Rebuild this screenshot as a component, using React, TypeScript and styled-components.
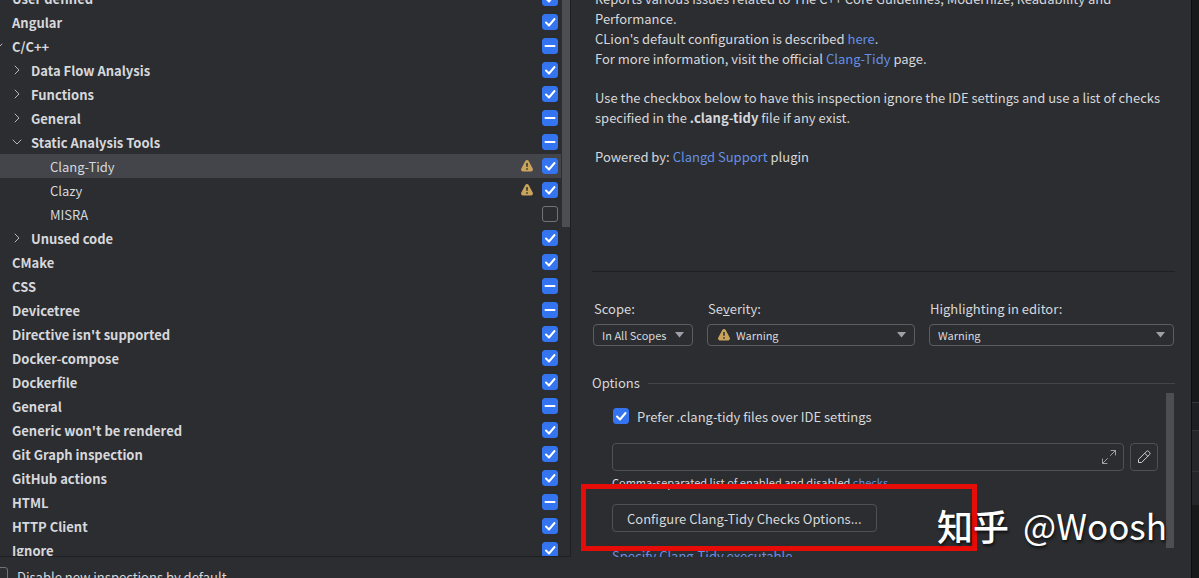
import React from 'react';
import styled, { createGlobalStyle } from 'styled-components';

const Global = createGlobalStyle`
  *, *::before, *::after { box-sizing: border-box; }
  body {
    margin: 0;
    background: #18191b;
    color: #d7d8dc;
    font: 13px/20px "Noto Sans CJK SC", "Noto Sans", sans-serif;
    overflow: hidden;
  }
  button, input, select { font: inherit; color: inherit; }
`;

const Window = styled.div`
  display: flex;
  height: 100vh;
  position: relative;
`;

const Dialog = styled.main`
  flex: 1;
  min-width: 0;
  display: grid;
  grid-template-rows: minmax(0, 1fr) 21px;
  background: #2b2d30;
  border-right: 1px solid #0c0c0d;
`;

const Backdrop = styled.aside`
  width: 7px;
  display: flex;
  flex-direction: column;
  background: #18191b;
`;

const Pane = styled.div<{ $height: number; $tone: string }>`
  height: ${p => p.$height}px;
  background: ${p => p.$tone};
  border-top: 1px solid #323438;
`;

const PaneSpacer = styled.div`
  height: 402px;
`;

const Content = styled.div`
  display: grid;
  grid-template-columns: minmax(0, 571fr) minmax(0, 620fr);
  min-height: 0;
`;

const TreePanel = styled.section`
  display: flex;
  min-width: 0;
  overflow: hidden;
  border-right: 1px solid #1e1f22;
  border-bottom: 1px solid #1e1f22;
`;

const Tree = styled.ul`
  flex: 1;
  min-width: 0;
  list-style: none;
  margin: -14px 1px 0 0;
  padding: 0;
`;

const TreeRow = styled.li<{ $level: number; $selected?: boolean }>`
  display: flex;
  align-items: center;
  height: 24px;
  padding-right: 3px;
  background: ${p => (p.$selected ? '#43454a' : 'transparent')};
  font-weight: ${p => (p.$level === 2 ? 400 : 700)};

  &::before {
    content: '';
    width: ${p => p.$level * 19}px;
  }
`;

const ChevronSlot = styled.span`
  display: flex;
  width: 16px;
  margin: 0 6px 0 -10px;
  color: #b4b8bf;
`;

const RowLabel = styled.label`
  flex: 1;
  padding-top: 2px;
`;

const WarnSlot = styled.span`
  display: flex;
  margin-right: 8px;
`;

const Thumb = styled.div<{ $height: number }>`
  flex: none;
  width: 8px;
  height: ${p => p.$height}px;
  background: #4d4e51;
`;

const BoxWrap = styled.span`
  display: inline-grid;
  flex: none;
  width: 16px;
  height: 16px;

  > * { grid-area: 1 / 1; }
  > svg { pointer-events: none; }
`;

const BoxInput = styled.input`
  appearance: none;
  width: 16px;
  height: 16px;
  margin: 0;
  border: 1px solid #6f737a;
  border-radius: 3px;

  &:checked, &:indeterminate {
    border-color: #3574f0;
    background: #3574f0;
  }
`;

const Footer = styled.footer`
  display: flex;
  gap: 9px;
  padding-top: 10px;
  margin-left: -8px;
  overflow: hidden;
`;

const FooterLabel = styled.label`
  white-space: nowrap;
`;

const Details = styled.section`
  display: flex;
  flex-direction: column;
  min-width: 0;
  overflow: hidden;
  padding: 0 16px 0 21px;
`;

const Description = styled.div`
  flex: none;
  height: 283px;
  margin-top: -11px;
  padding: 0 3px;
  border-bottom: 1px solid #1e1f22;
`;

const Paragraph = styled.p`
  margin: 0 0 19px;
`;

const Link = styled.a`
  color: #6590e4;
  text-decoration: none;
`;

const Settings = styled.div`
  display: grid;
  grid-template-columns: 100px minmax(0, 208fr) minmax(0, 245fr);
  gap: 14px;
  padding: 27px 1px 0;
`;

const Field = styled.div`
  display: flex;
  flex-direction: column;
  gap: 5px;
`;

const FieldLabel = styled.label`
  padding-left: 1px;
`;

const SelectFrame = styled.div`
  display: grid;
  align-items: center;

  > * { grid-area: 1 / 1; }
  > svg { pointer-events: none; }
`;

const Select = styled.select<{ $icon?: boolean }>`
  appearance: none;
  width: 100%;
  height: 22px;
  padding: 0 20px 0 ${p => (p.$icon ? 28 : 8)}px;
  border: 1px solid #5a5d63;
  border-radius: 4px;
  background: transparent;
  font-size: 11px;
  line-height: 20px;
`;

const ArrowIcon = styled.svg`
  justify-self: end;
  margin-right: 9px;
`;

const SelectWarn = styled.span`
  display: flex;
  padding-left: 10px;
  pointer-events: none;
`;

const OptionsHeading = styled.h2`
  display: flex;
  align-items: center;
  gap: 8px;
  margin: 27px 0 0;
  font-size: 13px;
  font-weight: 400;
  line-height: 20px;

  &::after {
    content: '';
    flex: 1;
    height: 1px;
    background: #43454a;
  }
`;

const OptionsScroll = styled.div`
  display: flex;
  flex: 1;
  min-height: 0;
  padding-right: 1px;
`;

const Options = styled.div`
  flex: 1;
  min-width: 0;
  padding: 13px 8px 0 20px;
`;

const CheckLine = styled.div`
  display: flex;
  align-items: center;
  gap: 8px;
  height: 20px;
  padding-left: 1px;
`;

const CheckLabel = styled.label`
  padding-top: 2px;
`;

const InputRow = styled.div`
  display: flex;
  gap: 6px;
  margin-top: 17px;
`;

const InputFrame = styled.div`
  display: flex;
  flex: 1;
  align-items: center;
  height: 28px;
  padding-right: 6px;
  border: 1px solid #4e5157;
  border-radius: 4px;
`;

const TextInput = styled.input`
  flex: 1;
  min-width: 0;
  padding: 0 8px;
  border: 0;
  outline: 0;
  background: transparent;
`;

const PlainButton = styled.button`
  display: flex;
  padding: 0;
  border: 0;
  background: none;
`;

const Button = styled.button`
  display: flex;
  align-items: center;
  justify-content: center;
  height: 28px;
  padding: 2px 14px 0;
  border: 1px solid #4e5157;
  border-radius: 4px;
  background: transparent;
  white-space: nowrap;
`;

const IconButton = styled(Button)`
  width: 28px;
  padding: 0;
`;

const Hint = styled.p`
  margin: 1px 0 12px;
  font-size: 11px;
`;

const SpecifyLine = styled.p`
  margin: 14px 0 0;
`;

const Highlight = styled.div`
  position: absolute;
  left: 581px;
  top: 484px;
  width: 396px;
  height: 67px;
  border: 5px solid #e60c08;
  pointer-events: none;
`;

const Watermark = styled.div`
  position: absolute;
  right: 32px;
  top: 500px;
  display: flex;
  gap: 14px;
  color: #fff;
  font-size: 35px;
  line-height: 50px;
  text-shadow: 1px 2px 3px rgba(0, 0, 0, 0.7);
  white-space: nowrap;
  pointer-events: none;
`;

const WatermarkSite = styled.span`
  font-size: 36px;
  font-weight: 500;
`;

type State = 'on' | 'mixed' | 'off';

function Chevron({ open }: { open: boolean }) {
  return (
    <svg width="16" height="16" viewBox="0 0 16 16" fill="none" stroke="currentColor" strokeLinecap="round" strokeLinejoin="round">
      <path d={open ? 'M4 6l4 4 4-4' : 'M6 4l4 4-4 4'} />
    </svg>
  );
}

function WarningIcon() {
  return (
    <svg width="14" height="14" viewBox="0 0 14 14">
      <path d="M5.300 1.900a2 2 0 0 1 3.400 0l4 7.700a1.900 1.900 0 0 1-1.700 2.800H3a1.900 1.900 0 0 1-1.700-2.800z" fill="#c9a45a" />
      <path d="M7 4v3.800M7 9.200v1.600" stroke="#2b2d30" strokeWidth="1.500" />
    </svg>
  );
}

function Checkbox({ id, state }: { id: string; state: State }) {
  const setMixed = (node: HTMLInputElement | null) => {
    if (node) node.indeterminate = state === 'mixed';
  };
  return (
    <BoxWrap>
      <BoxInput id={id} type="checkbox" defaultChecked={state === 'on'} ref={setMixed} />
      {state !== 'off' && (
        <svg width="16" height="16" viewBox="0 0 16 16" fill="none" stroke="#fff" strokeWidth="2" strokeLinecap="round" strokeLinejoin="round">
          <path d={state === 'on' ? 'M4 8.500l3 3 5.500-6.500' : 'M3.500 8h9'} />
        </svg>
      )}
    </BoxWrap>
  );
}

function DropArrow() {
  return (
    <ArrowIcon width="9" height="6" viewBox="0 0 9 6">
      <path d="M0 0h9L4.500 5.500z" fill="#9da0a8" />
    </ArrowIcon>
  );
}

interface Node {
  name: string;
  level: number;
  state: State;
  open?: boolean;
  warn?: boolean;
  selected?: boolean;
}

const nodes: Node[] = [
  { name: 'User defined', level: 0, state: 'on' },
  { name: 'Angular', level: 0, state: 'on' },
  { name: 'C/C++', level: 0, state: 'mixed', open: true },
  { name: 'Data Flow Analysis', level: 1, state: 'on', open: false },
  { name: 'Functions', level: 1, state: 'on', open: false },
  { name: 'General', level: 1, state: 'mixed', open: false },
  { name: 'Static Analysis Tools', level: 1, state: 'mixed', open: true },
  { name: 'Clang-Tidy', level: 2, state: 'on', warn: true, selected: true },
  { name: 'Clazy', level: 2, state: 'on', warn: true },
  { name: 'MISRA', level: 2, state: 'off' },
  { name: 'Unused code', level: 1, state: 'on', open: false },
  { name: 'CMake', level: 0, state: 'on' },
  { name: 'CSS', level: 0, state: 'mixed' },
  { name: 'Devicetree', level: 0, state: 'mixed' },
  { name: "Directive isn't supported", level: 0, state: 'on' },
  { name: 'Docker-compose', level: 0, state: 'on' },
  { name: 'Dockerfile', level: 0, state: 'on' },
  { name: 'General', level: 0, state: 'mixed' },
  { name: "Generic won't be rendered", level: 0, state: 'on' },
  { name: 'Git Graph inspection', level: 0, state: 'on' },
  { name: 'GitHub actions', level: 0, state: 'on' },
  { name: 'HTML', level: 0, state: 'mixed' },
  { name: 'HTTP Client', level: 0, state: 'on' },
  { name: 'Ignore', level: 0, state: 'on' },
];

export default function App() {
  return (
    <Window>
      <Global />
      <Dialog>
        <Content>
          <TreePanel>
            <Tree>
              {nodes.map((n, i) => (
                <TreeRow key={i} $level={n.level} $selected={n.selected}>
                  <ChevronSlot>{n.open !== undefined && <Chevron open={n.open} />}</ChevronSlot>
                  <RowLabel htmlFor={`node-${i}`}>{n.name}</RowLabel>
                  {n.warn && <WarnSlot><WarningIcon /></WarnSlot>}
                  <Checkbox id={`node-${i}`} state={n.state} />
                </TreeRow>
              ))}
            </Tree>
            <Thumb $height={227} />
          </TreePanel>
          <Details>
            <Description>
              <Paragraph>
                Reports various issues related to The C++ Core Guidelines, Modernize, Readability and Performance.
                <br />
                CLion's default configuration is described <Link href="#here">here</Link>.
                <br />
                For more information, visit the official <Link href="#clang-tidy">Clang-Tidy</Link> page.
              </Paragraph>
              <Paragraph>
                Use the checkbox below to have this inspection ignore the IDE settings and use a list of checks
                specified in the <b>.clang-tidy</b> file if any exist.
              </Paragraph>
              <Paragraph>
                Powered by: <Link href="#clangd">Clangd Support</Link> plugin
              </Paragraph>
            </Description>
            <Settings>
              <Field>
                <FieldLabel htmlFor="scope">Scope:</FieldLabel>
                <SelectFrame>
                  <Select id="scope"><option>In All Scopes</option></Select>
                  <DropArrow />
                </SelectFrame>
              </Field>
              <Field>
                <FieldLabel htmlFor="severity">Se<u>v</u>erity:</FieldLabel>
                <SelectFrame>
                  <Select id="severity" $icon><option>Warning</option></Select>
                  <SelectWarn><WarningIcon /></SelectWarn>
                  <DropArrow />
                </SelectFrame>
              </Field>
              <Field>
                <FieldLabel htmlFor="highlighting">Highlighting in editor:</FieldLabel>
                <SelectFrame>
                  <Select id="highlighting"><option>Warning</option></Select>
                  <DropArrow />
                </SelectFrame>
              </Field>
            </Settings>
            <OptionsHeading>Options</OptionsHeading>
            <OptionsScroll>
              <Options>
                <CheckLine>
                  <Checkbox id="prefer" state="on" />
                  <CheckLabel htmlFor="prefer">Prefer .clang-tidy files over IDE settings</CheckLabel>
                </CheckLine>
                <InputRow>
                  <InputFrame>
                    <TextInput aria-label="Checks" />
                    <PlainButton aria-label="Expand">
                      <svg width="16" height="16" viewBox="0 0 16 16" fill="none" stroke="#9da0a8" strokeLinecap="round" strokeLinejoin="round">
                        <path d="M9.500 6.500l5-5M10 1.500h4.500V6M6.500 9.500l-5 5M1.500 10v4.500H6" />
                      </svg>
                    </PlainButton>
                  </InputFrame>
                  <IconButton aria-label="Edit">
                    <svg width="16" height="16" viewBox="0 0 16 16" fill="none" stroke="#ced0d6" strokeLinejoin="round">
                      <path d="M2.500 13.500v-3.100l7.900-7.900a1.600 1.600 0 0 1 2.300 0l.8.8a1.600 1.600 0 0 1 0 2.300l-7.900 7.900zM8.700 4.200l3.100 3.100" />
                    </svg>
                  </IconButton>
                </InputRow>
                <Hint>Comma-separated list of enabled and disabled <Link href="#checks">checks</Link></Hint>
                <Button>Configure Clang-Tidy Checks Options...</Button>
                <SpecifyLine><Link href="#executable">Specify Clang-Tidy executable</Link></SpecifyLine>
              </Options>
              <Thumb $height={155} />
            </OptionsScroll>
          </Details>
        </Content>
        <Footer>
          <Checkbox id="disable-new" state="off" />
          <FooterLabel htmlFor="disable-new">Disable new inspections by default</FooterLabel>
        </Footer>
      </Dialog>
      <Backdrop>
        <PaneSpacer />
        <Pane $height={28} $tone="#1e1f22" />
        <Pane $height={41} $tone="#25262a" />
        <Pane $height={34} $tone="#25262a" />
      </Backdrop>
      <Highlight />
      <Watermark>
        <WatermarkSite>知乎</WatermarkSite>
        <span>@Woosh</span>
      </Watermark>
    </Window>
  );
}
